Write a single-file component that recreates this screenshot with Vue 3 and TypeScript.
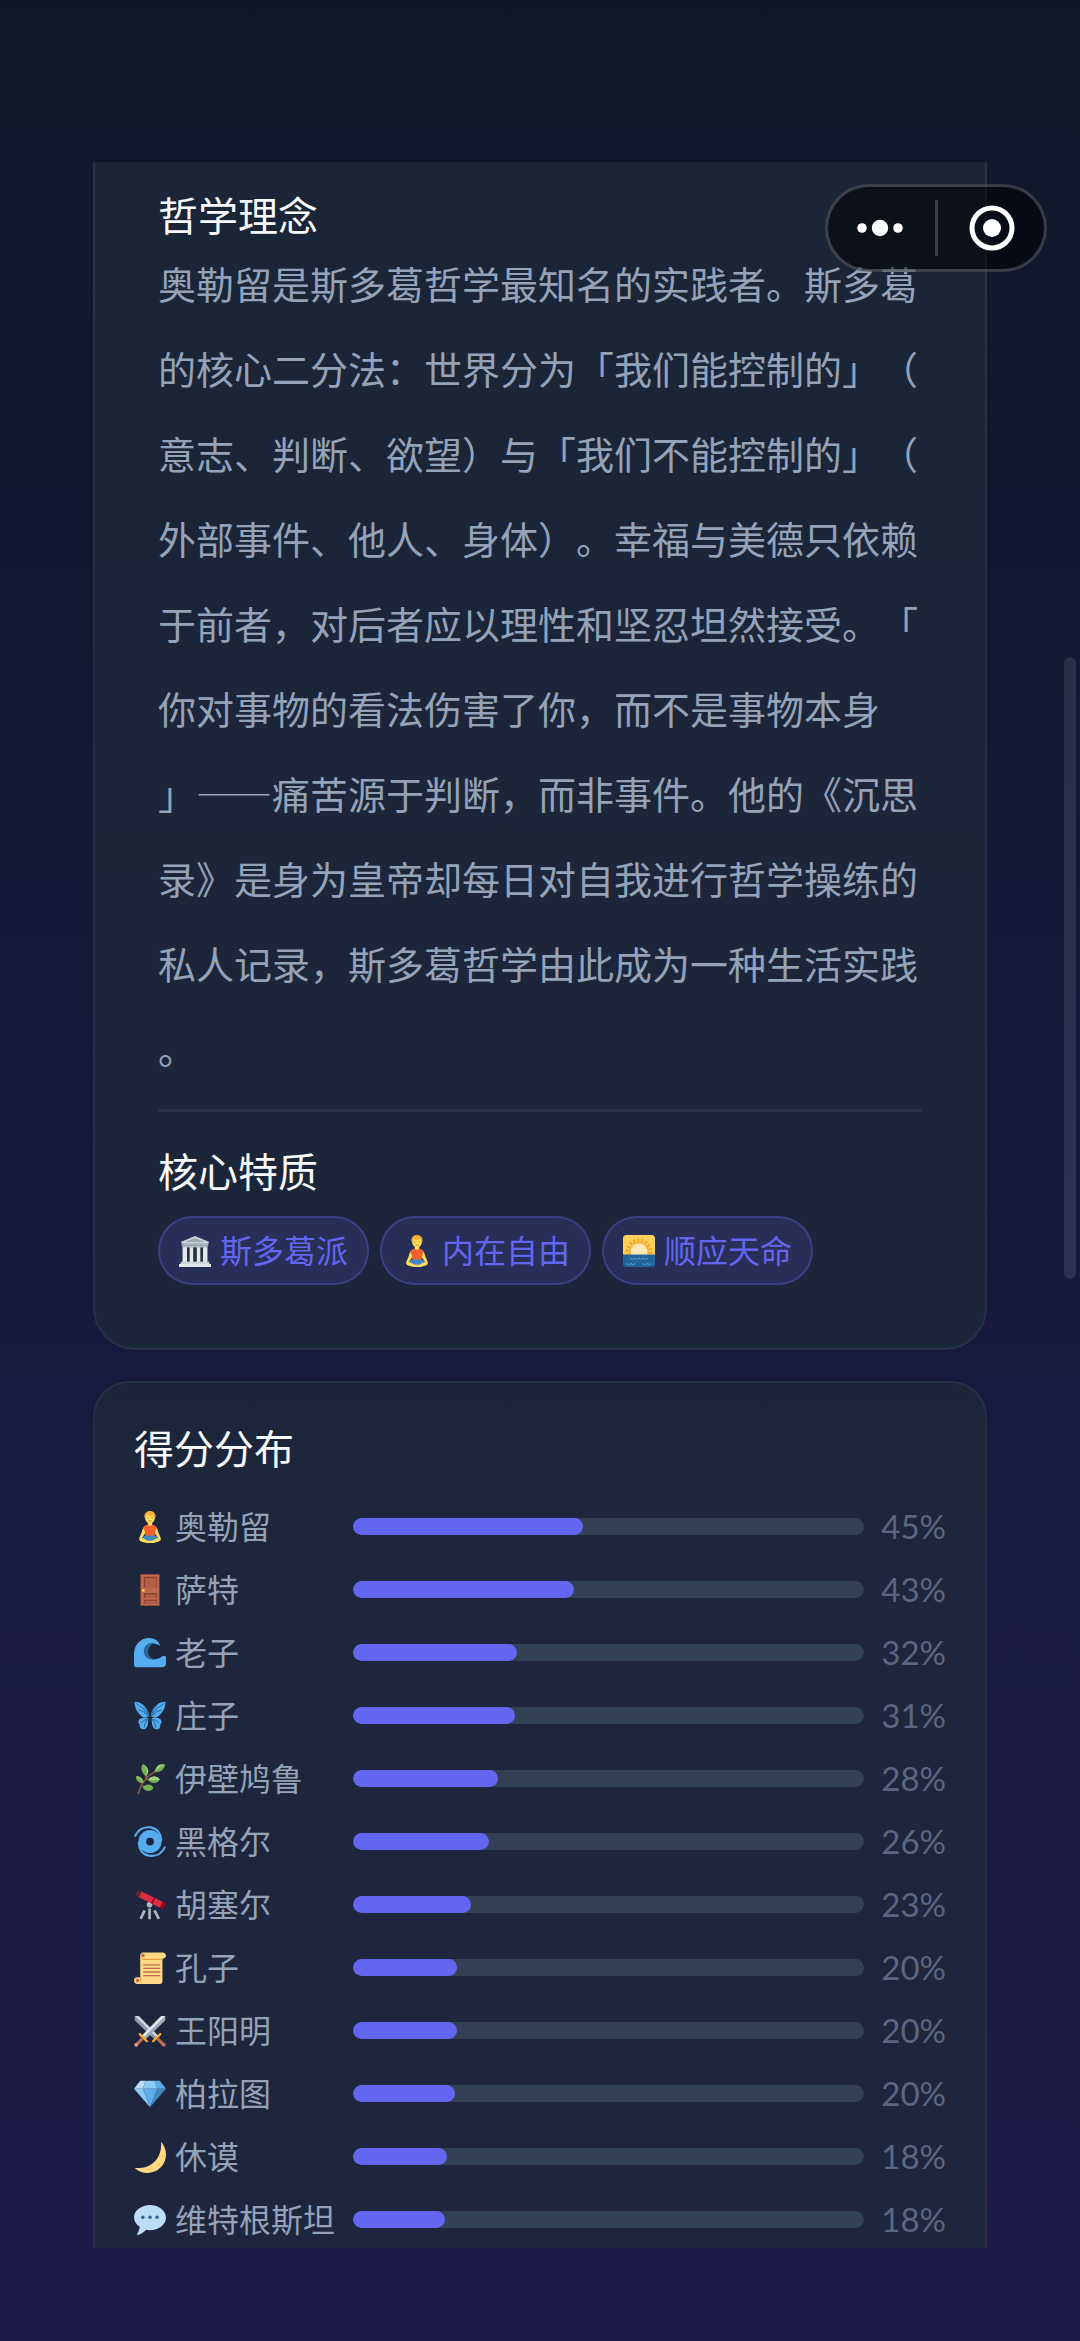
<script setup lang="ts">
interface Trait {
  icon: string
  label: string
}

interface Score {
  icon: string
  name: string
  share: number
}

const philosophyLines: string[] = [
  '奥勒留是斯多葛哲学最知名的实践者。斯多葛',
  '的核心二分法：世界分为「我们能控制的」（',
  '意志、判断、欲望）与「我们不能控制的」（',
  '外部事件、他人、身体）。幸福与美德只依赖',
  '于前者，对后者应以理性和坚忍坦然接受。「',
  '你对事物的看法伤害了你，而不是事物本身',
  '」——痛苦源于判断，而非事件。他的《沉思',
  '录》是身为皇帝却每日对自我进行哲学操练的',
  '私人记录，斯多葛哲学由此成为一种生活实践',
  '。',
]

const traits: Trait[] = [
  { icon: 'temple', label: '斯多葛派' },
  { icon: 'lotus', label: '内在自由' },
  { icon: 'sunrise', label: '顺应天命' },
]

const scores: Score[] = [
  { icon: 'lotus', name: '奥勒留', share: 45 },
  { icon: 'door', name: '萨特', share: 43.3 },
  { icon: 'wave', name: '老子', share: 32.1 },
  { icon: 'butterfly', name: '庄子', share: 31.7 },
  { icon: 'herb', name: '伊壁鸠鲁', share: 28.4 },
  { icon: 'cyclone', name: '黑格尔', share: 26.6 },
  { icon: 'telescope', name: '胡塞尔', share: 23 },
  { icon: 'scroll', name: '孔子', share: 20.3 },
  { icon: 'swords', name: '王阳明', share: 20.3 },
  { icon: 'gem', name: '柏拉图', share: 20 },
  { icon: 'moon', name: '休谟', share: 18.4 },
  { icon: 'speech', name: '维特根斯坦', share: 18.1 },
]
</script>

<template>
  <div class="page" lang="zh-CN">
    <svg class="sprite" aria-hidden="true">
      <symbol id="temple" viewBox="0 0 36 36">
        <path fill="#66757f" d="M5 12h26v19H5z" />
        <path fill="#292f33" d="M8 13h20v18H8z" />
        <path fill="#ccd6dd" d="M18 1 2.500 7.500V9h31V7.500z" />
        <path fill="#9aaab4" d="M18 3.500 7 8h22z" />
        <path fill="#aab8c2" d="M3 9h30v3H3z" />
        <path fill="#e1e8ed" d="M4 12h5v19H4zM12 12h4v19h-4zM20 12h4v19h-4zM27 12h5v19h-5z" />
        <path fill="#aab8c2" d="M4 12h28v2H4z" />
        <path fill="#ccd6dd" d="M2 30h32v3H2z" />
        <path fill="#e1e8ed" d="M0 32.500h36V36H0z" />
      </symbol>
      <symbol id="lotus" viewBox="0 0 36 36">
        <path fill="#ffdc5d" d="M15.500 11h5v6h-5z" />
        <path fill="#ffdc5d" d="M13 17c-3 1-3.500 4-4.500 7.500L6 30l2 2 4-6 2-5zM23 17c3 1 3.500 4 4.500 7.500L30 30l-2 2-4-6-2-5z" />
        <path fill="#f4622c" d="M15 15.500c2 1.500 4 1.500 6 0 3 .5 4 2 4.500 4.500L24 22l-1 7H13l-1-7-1.500-2c.5-2.500 1.500-4 4.500-4.500z" />
        <path fill="#4289c1" d="M12.500 27.500h11l6 4-11.500 3.500L6.500 31.500z" />
        <path fill="#ffdc5d" d="M6.500 30c3 0 6 2 9 3.500h5c3-1.500 6-3.500 9-3.500 1.500 1.500.5 3.500-1.500 4.300L22 36h-8l-6-1.700c-2-.8-3-2.800-1.500-4.300z" />
        <ellipse cx="18" cy="7.500" rx="5.500" ry="6.500" fill="#ffdc5d" />
        <path fill="#ffac33" d="M11.800 8C11 3 14 0 18 0s7 3 6.200 8c-1-1.500-1.200-3-2.200-4-2 1.300-6 1.300-8 0-1 1-1.200 2.500-2.200 4z" />
        <path fill="none" stroke="#b87933" stroke-width=".8" d="M14.500 7.500q1 1 2 0M19.500 7.500q1 1 2 0M16 10.800q2 1.200 4 0" />
      </symbol>
      <symbol id="sunrise" viewBox="0 0 36 36">
        <path fill="#ffd15c" d="M4 0h28a4 4 0 0 1 4 4v19H0V4a4 4 0 0 1 4-4z" />
        <circle cx="18" cy="19" r="13" fill="none" stroke="#f9a01b" stroke-width="4" stroke-dasharray="2 2.540" />
        <circle cx="18" cy="19" r="11.500" fill="#f9b03c" />
        <circle cx="18" cy="19" r="9.500" fill="#ffe8b6" />
        <path fill="#226699" d="M0 22h36v10a4 4 0 0 1-4 4H4a4 4 0 0 1-4-4z" />
        <path fill="none" stroke="#55acee" stroke-width="1.200" opacity=".7" d="M8 26q2.500 2.500 5 0 2.500 2.500 5 0 2.500 2.500 5 0 2.500 2.500 5 0M4 32q2.500 2.500 5 0 2.500 2.500 5 0M22 32q2.500 2.500 5 0 2.500 2.500 5 0" />
      </symbol>
      <symbol id="door" viewBox="0 0 36 36">
        <path fill="#8a4633" d="M7 0h22v36H7z" />
        <path fill="#c1694f" d="M8 1h20v34H8z" />
        <path fill="#8a4633" d="M11 3h15v12H11zM11 21.500h15V27H11zM11 29h15v4.500H11z" />
        <path fill="#b55f47" d="M12.500 4.500H25V15H12.500zM12.500 23H25v4H12.500zM12.500 30.500H25v3H12.500z" />
        <circle cx="10.500" cy="18.500" r="1.600" fill="#ffcc4d" />
      </symbol>
      <symbol id="wave" viewBox="0 0 36 36">
        <path fill="#55acee" d="M29.500 10C28 4 23 1 17 1 7 1 0 9 0 19v12c0 2 1 3 3 3h29c3 0 4-2 4-5v-5.500c0-2.500-2.500-3-4.500-1.500-4 3-8 3.500-11.500 2.500-6-1.500-8-7-7-11C14.500 8 23 5 29.500 10z" />
        <path fill="#2a6797" d="M24 6.800C17 5.500 11 9.500 11 16c0 6 5 10 12 9.500-5-2-8-6-7-10.500C17 10.500 20 8 24 6.800z" />
      </symbol>
      <symbol id="butterfly" viewBox="0 0 36 36">
        <path fill="#55acee" d="M.5 2C8 2 15.500 7 17 18c-3 2.500-7 2-9.500-.5C3 13 .5 8 .5 2zM35.500 2C28 2 20.500 7 19 18c3 2.500 7 2 9.500-.5C33 13 35.500 8 35.500 2zM16 20.500c-5-1.500-11 0-11 4 0 1.500.5 2.300 1.500 3-.5 4 1.500 5.500 4.500 5.500s5.500-4 5-12.500zM20 20.500c5-1.500 11 0 11 4 0 1.500-.5 2.300-1.500 3 .5 4-1.500 5.500-4.500 5.500s-5.500-4-5-12.500z" />
        <path fill="none" stroke="#226699" stroke-width="1.100" d="M2.500 4q9 5 14.500 14M5 11q6 1 11 7M10 5.500q4 4 7 12M33.500 4q-9 5-14.500 14M31 11q-6 1-11 7M26 5.500q-4 4-7 12M15.500 21.500q-5 1-7.500 4M15.500 22q-4 4-4 9M20.500 21.500q5 1 7.500 4M20.500 22q4 4 4 9" />
        <path fill="#292f33" d="M17.200 15h1.600l.6 7L18 26l-1.400-4z" />
      </symbol>
      <symbol id="herb" viewBox="0 0 36 36">
        <path fill="none" stroke="#8b5e3c" stroke-width="1.800" stroke-linecap="round" d="M5 34C8 22 16 13 28 8M13 14q0 3 2 5M7 22q2-1 3 1M17 18q3 2 6 1M10 26q3 2 6 2" />
        <path fill="#77b255" d="M10 1c-3 4-2 10 3.500 14C18 10 16 4 10 1zM35 2c-6-1-11 2-12 8 6 1 11-2 12-8zM2 15c0 5 4 8 8.500 7C10 17 6 14 2 15zM16 19c4-5 10-5 13 0-4 5-10 4-13 0zM10 28c3-5 9-5 12 0-3 5-9 4-12 0z" />
        <path fill="#a6d388" d="M10 1c5 4 5 9 3.500 14C18 10 16 4 10 1zM35 2c-5 2-9 4-12 8 5-7 2-9 12-8zM2 15c4 1 7 3 8.500 7C10 17 6 14 2 15zM16 19c4-5 10-5 13 0z" />
      </symbol>
      <symbol id="cyclone" viewBox="0 0 36 36">
        <circle cx="18" cy="17.500" r="8.700" fill="none" stroke="#55acee" stroke-width="8.600" />
        <path fill="none" stroke="#55acee" stroke-width="2.400" stroke-linecap="round" d="M1.500 11C5 3.500 12 .5 19 1.600c7 1.200 12 7 11.500 15" />
        <path fill="none" stroke="#55acee" stroke-width="2.400" stroke-linecap="round" d="M34.500 24C31 31.500 24 34.500 17 33.400c-7-1.200-12-7-11.500-15" />
      </symbol>
      <symbol id="telescope" viewBox="0 0 36 36">
        <path fill="none" stroke="#aab8c2" stroke-width="3" d="M12 24 7.500 33.500M17.500 22v12M23 24l5 9.500" />
        <circle cx="17.500" cy="17.500" r="3.200" fill="#aab8c2" />
        <path fill="#dd2e44" d="m8 2.500 26.500 13-3.500 6.500L5 9z" />
        <path fill="#a0041e" d="m22 9.500 2 1-3 6.500-2-1zM32 14l3.500 2-3 6.500-3.500-1.700z" />
        <path fill="#582a38" d="m4 1 4.500 2L5.500 9.500 1.500 7z" />
      </symbol>
      <symbol id="scroll" viewBox="0 0 36 36">
        <path fill="#ffd983" d="M7 4c0-2 1-3.500 3.500-3.500H32C34.500.5 36 2 36 4s-1.500 3.500-4 3.500L32 33c0 2-1 3-3 3H4c-2.500 0-4-1.500-4-4s1.500-3.500 4-3.500h3z" />
        <path fill="#e39f3d" d="M9 7.500h23v1.500H9zM7 28.500h1V34H7z" />
        <circle cx="10" cy="4" r="2" fill="#c1694f" />
        <circle cx="4" cy="32" r="2" fill="#c1694f" />
        <path fill="none" stroke="#c1694f" stroke-width="1.500" d="M10.500 14.500h19M10.500 18.500h19M10.500 22.500h19M10.500 26.500h19" />
      </symbol>
      <symbol id="swords" viewBox="0 0 36 36">
        <path fill="#ccd6dd" d="M1 1h4.500L27 23l-4 4L1 6z" />
        <path fill="#8899a6" d="m1 1 24 24-2 2L1 6z" />
        <path fill="#e1e8ed" d="M35 1h-4.500L9 23l4 4L35 6z" />
        <path fill="#99aab5" d="M35 1 11 25l2 2L35 6z" />
        <path fill="none" stroke="#ffac33" stroke-width="2.600" stroke-linecap="round" d="m6.500 21.500 8 8M29.500 21.500l-8 8" />
        <path fill="none" stroke="#bf6952" stroke-width="3.500" d="m9.500 26.500-7 7M26.500 26.500l7 7" />
        <circle cx="2.500" cy="33.500" r="2.200" fill="#d99e82" />
        <circle cx="33.500" cy="33.500" r="2.200" fill="#c1694f" />
      </symbol>
      <symbol id="gem" viewBox="0 0 36 36">
        <path fill="#bdddf4" d="M13 3H7l-7 9h10z" />
        <path fill="#5dadec" d="m36 12-7-9h-6l3 9z" />
        <path fill="#4289c1" d="M26 12h10L18 33z" />
        <path fill="#8ccaf7" d="M10 12H0l18 21zm3-9-3 9h16l-3-9z" />
        <path fill="#5dadec" d="m18 33-8-21h16z" />
      </symbol>
      <symbol id="moon" viewBox="0 0 36 36">
        <path fill="#ffd983" d="M30.312.776C32 19 20 32 .776 30.312c8.199 7.717 21.091 7.588 29.107-.429C37.900 21.867 38.030 8.975 30.312.776z" />
        <g fill="#ffcc4d">
          <circle cx="28" cy="27" r="1.800" />
          <circle cx="32.500" cy="17" r="1.200" />
          <circle cx="17" cy="32" r="1.300" />
        </g>
      </symbol>
      <symbol id="speech" viewBox="0 0 36 36">
        <path fill="#bdddf4" d="M18 1C8.059 1 0 7.268 0 15c0 4.368 2.574 8.268 6.604 10.835C6.080 28.144 4.859 31.569 3 35c5.758-1.096 8.439-3.603 10.611-5.989C15.028 29.296 16.488 29.500 18 29.500c9.941 0 18-6.518 18-14.250S27.941 1 18 1z" />
        <g fill="#2a6797">
          <circle cx="10" cy="15" r="2" />
          <circle cx="18" cy="15" r="2" />
          <circle cx="26" cy="15" r="2" />
        </g>
      </symbol>
    </svg>

    <main class="scroller">
      <section class="card profile">
        <h2 class="title">哲学理念</h2>
        <p class="essay">{{ philosophyLines.join('\n') }}</p>
        <div class="traits-block">
          <h2 class="title">核心特质</h2>
          <ul class="traits">
            <li v-for="trait in traits" :key="trait.label" class="trait">
              <svg class="emoji" aria-hidden="true"><use :href="`#${trait.icon}`" /></svg>
              <span class="label">{{ trait.label }}</span>
            </li>
          </ul>
        </div>
      </section>

      <section class="card distribution">
        <h2 class="title">得分分布</h2>
        <ul class="scores">
          <li v-for="score in scores" :key="score.name" class="score">
            <span class="who">
              <svg class="emoji" aria-hidden="true"><use :href="`#${score.icon}`" /></svg>
              <span class="label">{{ score.name }}</span>
            </span>
            <span class="track">
              <span class="fill" :style="{ width: `${score.share}%` }"></span>
            </span>
            <span class="percent">{{ Math.floor(score.share) }}%</span>
          </li>
        </ul>
      </section>
    </main>

    <div class="capsule">
      <button class="capsule-button more" type="button" aria-label="更多">
        <svg width="46" height="48" viewBox="0 0 46 48" fill="#fff">
          <circle cx="5" cy="24" r="4.800" />
          <circle cx="23" cy="24" r="8.200" />
          <circle cx="41" cy="24" r="4.800" />
        </svg>
      </button>
      <span class="capsule-rule"></span>
      <button class="capsule-button close" type="button" aria-label="关闭">
        <svg width="48" height="48" viewBox="0 0 48 48">
          <circle cx="24" cy="24" r="20" fill="none" stroke="#fff" stroke-width="5" />
          <circle cx="24" cy="24" r="9" fill="#fff" />
        </svg>
      </button>
    </div>
    <div class="scroll-thumb"></div>
  </div>
</template>

<style>
body {
  margin: 0;
  background: #0f172a;
}
</style>

<style scoped>
.page {
  position: relative;
  box-sizing: border-box;
  height: 100vh;
  padding: 162px 93px 93px;
  background: linear-gradient(180deg, #0f172a 0%, #1e1b4b 100%);
  color: #94a3b8;
  font-family: "Noto Sans CJK SC", "Noto Sans", sans-serif;
  font-size: 32px;
  text-spacing-trim: space-all;
}

.sprite {
  position: absolute;
  width: 0;
  height: 0;
}

.scroller {
  display: flex;
  flex-direction: column;
  gap: 31px;
  height: 100%;
  overflow: hidden;
}

.card {
  flex: none;
  border: 2px solid rgba(255, 255, 255, 0.05);
  background: rgba(30, 41, 59, 0.8);
}

.profile {
  padding: 26px 63px 63px;
  border-top: 0;
  border-radius: 0 0 42px 42px;
}

.distribution {
  padding: 38px 39px 40px;
  border-radius: 36px;
}

.title {
  margin: 0;
  color: #f8fafc;
  font-size: 40px;
  font-weight: 400;
  line-height: 52px;
}

.essay {
  margin: 0;
  font-size: 38px;
  font-variant-east-asian: full-width;
  line-height: 85px;
  white-space: pre;
}

.traits-block {
  margin-top: 19px;
  padding-top: 32px;
  border-top: 3px solid rgba(255, 255, 255, 0.05);
}

.traits {
  display: flex;
  flex-wrap: wrap;
  gap: 11px;
  margin: 20px 0 0;
  padding: 0;
  list-style: none;
}

.trait {
  display: flex;
  align-items: center;
  gap: 9px;
  box-sizing: border-box;
  height: 69px;
  padding: 0 19px;
  border: 2px solid rgba(99, 102, 241, 0.3);
  border-radius: 35px;
  background: rgba(99, 102, 241, 0.16);
  color: #6366f1;
}

.emoji {
  flex: none;
  width: 32px;
  height: 32px;
}

.label {
  padding-bottom: 3px;
  line-height: 42px;
}

.scores {
  display: grid;
  gap: 18px;
  margin: 31px 0 0;
  padding: 0;
  list-style: none;
}

.score {
  display: flex;
  align-items: center;
  gap: 16px;
  height: 45px;
}

.who {
  display: flex;
  flex: none;
  align-items: center;
  gap: 9px;
  width: 203px;
  white-space: nowrap;
}

.track {
  flex: 1;
  height: 17px;
  overflow: hidden;
  border-radius: 9px;
  background: #334155;
}

.fill {
  display: block;
  height: 100%;
  border-radius: 9px;
  background: #6366f1;
}

.percent {
  flex: none;
  width: 66px;
  color: #5b6780;
  font-family: Lato, "Noto Sans", sans-serif;
  font-size: 33px;
  line-height: 45px;
  text-align: right;
}

.capsule {
  position: absolute;
  top: 184px;
  right: 33px;
  display: flex;
  align-items: center;
  box-sizing: border-box;
  width: 222px;
  height: 88px;
  border: 3px solid rgba(255, 255, 255, 0.2);
  border-radius: 44px;
  background: rgba(0, 0, 0, 0.54);
}

.capsule-button {
  display: flex;
  flex: 1;
  align-items: center;
  justify-content: center;
  height: 100%;
  padding: 0;
  border: 0;
  background: none;
}

.capsule-button.more {
  padding-right: 2px;
}

.capsule-button.close {
  padding-left: 2px;
}

.capsule-rule {
  width: 3px;
  height: 56px;
  background: rgba(255, 255, 255, 0.2);
}

.scroll-thumb {
  position: absolute;
  top: 657px;
  right: 4px;
  width: 12px;
  height: 622px;
  border-radius: 6px;
  background: rgba(255, 255, 255, 0.1);
}
</style>
